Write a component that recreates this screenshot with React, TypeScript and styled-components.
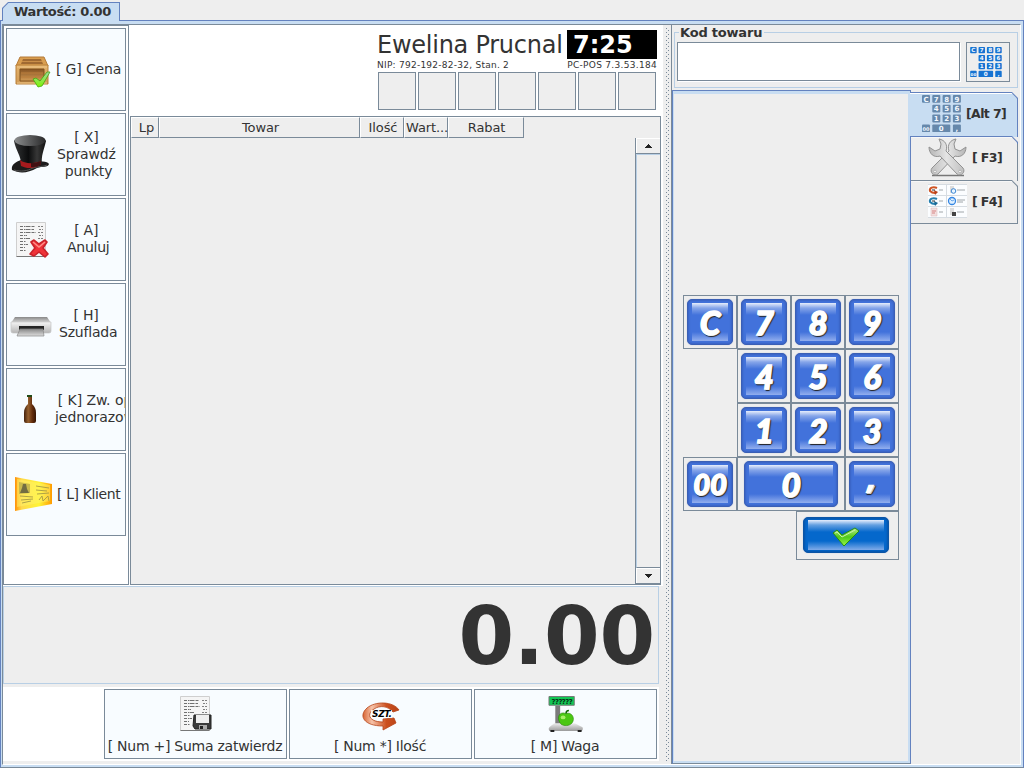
import React from 'react';
import styled, { createGlobalStyle } from 'styled-components';

const c = {
  bg: '#eeeeee',
  line: '#7a8a99',
  light: '#b8cfe5',
  tab: '#c8ddf2',
  blue: '#6382bf',
  text: '#333333',
  button: '#f8fcff',
};

const Global = createGlobalStyle`
  * { box-sizing: border-box; }
  body { margin: 0; background: ${c.bg}; overflow: hidden; }
  svg { display: block; flex: none; }
`;

const Page = styled.div`
  width: 1024px;
  height: 768px;
  display: flex;
  flex-direction: column;
  background: ${c.bg};
  color: ${c.text};
  font: 14px/17px 'DejaVu Sans', sans-serif;
  white-space: pre;
`;

const TabStrip = styled.div`
  height: 20px;
  padding: 2px 0 0 2px;
`;

const DocTab = styled.div`
  position: relative;
  width: 118px;
  height: 19px;
  padding: 1px 1px 0;
  background: ${c.blue};
  clip-path: polygon(6px 0, 100% 0, 100% 100%, 0 100%, 0 6px);
`;

const DocTabFace = styled.div`
  height: 18px;
  padding: 1px 0 0 11px;
  background: ${c.tab};
  clip-path: polygon(5.5px 0, 100% 0, 100% 100%, 0 100%, 0 5.5px);
  font-size: 13px;
  font-weight: bold;
  line-height: 16px;
  letter-spacing: -0.35px;
`;

const Frame = styled.div`
  height: 748px;
  border: 1px solid ${c.blue};
  border-bottom-color: ${c.line};
  padding: 3px 2px 2px 1px;
  background: ${c.tab};
`;

const Content = styled.div`
  height: 741px;
  display: flex;
  background: ${c.bg};
  border: 1px solid ${c.line};
  border-right-color: #fff;
  border-bottom-color: #fff;
`;

const SalePane = styled.div`
  width: 660px;
  display: flex;
  flex-direction: column;
`;

const SaleTop = styled.div`
  height: 561px;
  padding-bottom: 1px;
  display: flex;
  background: #fff;
`;

const Sidebar = styled.div`
  width: 126px;
  padding: 2px;
  display: flex;
  flex-direction: column;
  gap: 2px;
  border: 1px solid ${c.line};
  background: #fff;
`;

const SideButton = styled.div<{ $pad: number }>`
  height: 83px;
  flex: none;
  padding-left: ${p => p.$pad}px;
  display: flex;
  align-items: center;
  overflow: hidden;
  border: 1px solid ${c.line};
  background: ${c.button};
`;

const SideIcon = styled.div<{ $drop: number }>`
  padding-top: ${p => Math.max(0, p.$drop * 2)}px;
  padding-bottom: ${p => Math.max(0, p.$drop * -2)}px;
`;

const SideLabel = styled.div<{ $gap: number; $left?: boolean; $track?: number }>`
  margin-left: ${p => p.$gap}px;
  padding-bottom: 1px;
  text-align: ${p => (p.$left ? 'left' : 'center')};
  letter-spacing: ${p => p.$track ?? -0.15}px;
`;

const SaleMain = styled.div`
  width: 534px;
  padding: 0 2px 0 1px;
  display: flex;
  flex-direction: column;
`;

const Header = styled.div`
  height: 91px;
  display: flex;
  flex-direction: column;
  align-items: flex-end;
  padding: 5px 4px 0 0;
`;

const HeaderInfo = styled.div`
  width: 280px;
  display: flex;
  justify-content: space-between;
`;

const Operator = styled.div`
  width: 190px;
  font-size: 24px;
  line-height: 30px;
  height: 29px;
  letter-spacing: -0.25px;
`;

const Clock = styled.div`
  width: 90px;
  height: 29px;
  padding-left: 6px;
  background: #000;
  color: #fff;
  font-size: 24px;
  font-weight: bold;
  line-height: 30px;
`;

const Small = styled.div<{ $track: number }>`
  height: 12px;
  font-size: 9px;
  line-height: 12px;
  letter-spacing: ${p => p.$track}px;
`;

const Slots = styled.div`
  width: 280px;
  height: 40px;
  display: flex;
  gap: 2px;
  padding: 1px;
  background: ${c.bg};
`;

const Slot = styled.div`
  width: 38px;
  height: 38px;
  border: 1px solid ${c.line};
  box-shadow: 0 0 0 1px #fff;
  background: ${c.bg};
`;

const Table = styled.div`
  height: 469px;
  display: flex;
  flex-direction: column;
  border: 1px solid ${c.line};
  background: ${c.bg};
`;

const TableHead = styled.div`
  height: 21px;
  display: flex;
`;

const HeadCell = styled.div<{ $w: number; $shift: number }>`
  width: ${p => p.$w}px;
  padding-left: ${p => p.$shift}px;
  border: 1px solid ${c.line};
  border-top-color: #fff;
  border-left-color: #fff;
  text-align: center;
  font-size: 13px;
  line-height: 20px;
  letter-spacing: -0.1px;
`;

const TableBody = styled.div`
  flex: 1;
  display: flex;
  justify-content: flex-end;
`;

const ScrollBar = styled.div`
  width: 25px;
  display: flex;
  flex-direction: column;
  border-left: 1px solid ${c.line};
`;

const ScrollButton = styled.div`
  height: 16px;
  display: flex;
  align-items: center;
  justify-content: center;
  padding-right: 1px;
  border: 1px solid ${c.line};
  border-width: 0 0 1px 0;
  box-shadow: inset 1px 1px 0 #fff;
`;

const ScrollTrack = styled.div`
  flex: 1;
  border-left: 1px solid ${c.light};
  border-top: 1px solid ${c.light};
  border-bottom: 1px solid ${c.line};
`;

const Total = styled.div`
  width: 656px;
  height: 98px;
  padding-right: 3px;
  border: 1px solid ${c.light};
  text-align: right;
  font-size: 80px;
  font-weight: bold;
  line-height: 99px;
  letter-spacing: -0.2px;
`;

const ActionBar = styled.div`
  width: 656px;
  height: 74px;
  margin-top: 3px;
  padding: 2px;
  display: flex;
  justify-content: flex-end;
  gap: 2px;
  background: #fff;
`;

const ActionButton = styled.div`
  width: 183px;
  height: 70px;
  display: flex;
  flex-direction: column;
  align-items: center;
  padding-top: 6px;
  border: 1px solid ${c.line};
  background: ${c.button};
`;

const ActionLabel = styled.div`
  margin-top: 6px;
  padding-right: 1px;
  letter-spacing: -0.26px;
`;

const Divider = styled.div`
  width: 8px;
  padding: 3px 2px 2px 3px;
  display: flex;
`;

const Bumps = styled.div`
  flex: 1;
  background:
    radial-gradient(circle at 0.5px 0.5px, ${c.line} 0.6px, transparent 0.7px) 0 0 / 4px 4px,
    radial-gradient(circle at 0.5px 0.5px, ${c.line} 0.6px, transparent 0.7px) 2px 2px / 4px 4px;
`;

const InputPane = styled.div`
  width: 349px;
  border-left: 1px solid ${c.line};
`;

const CodeGroup = styled.fieldset`
  width: 344px;
  height: 63px;
  margin: 0 0 0 2px;
  padding: 2px 0 0 2px;
  min-width: 0;
  border: 1px solid ${c.light};
  display: flex;
`;

const CodeLegend = styled.legend`
  height: 15px;
  margin-left: 2px;
  padding: 0 2px 0 1px;
  font-size: 13px;
  font-weight: bold;
  line-height: 15px;
  letter-spacing: -0.2px;
`;

const CodeInput = styled.input`
  width: 283px;
  height: 39px;
  padding: 0 4px;
  border: 1px solid ${c.line};
  outline: 0;
  background: #fff;
  box-shadow: 1px 1px 0 #fff;
`;

const PadButton = styled.div`
  width: 44px;
  height: 40px;
  margin-left: 6px;
  padding: 4px 3px;
  border: 1px solid ${c.line};
`;

const PadPane = styled.div`
  height: 674px;
  margin-top: 2px;
  display: flex;
`;

const PadBody = styled.div`
  width: 239px;
  height: 674px;
  padding: 201px 0 0 8px;
  border: 1px solid ${c.blue};
  border-bottom-color: ${c.line};
  box-shadow: inset 0 3px 0 ${c.tab}, inset 1px 0 0 ${c.tab}, inset -2px -2px 0 ${c.tab};
`;

const Keys = styled.div`
  width: 218px;
  padding: 3px 0 0 2px;
  display: grid;
  grid-template-columns: repeat(4, 54px);
  grid-template-rows: repeat(4, 54px) 49px;
`;

const KeyCell = styled.div<{ $col: number; $row: number; $span?: number; $inset?: number; $enter?: boolean }>`
  grid-column: ${p => p.$col} / span ${p => p.$span || 1};
  grid-row: ${p => p.$row};
  margin-left: ${p => (p.$enter ? 5 : 0)}px;
  padding: ${p => (p.$enter ? '5px 9px 6px 6px' : `3px ${p.$inset || 3}px`)};
  display: flex;
  border: 1px solid ${c.line};
`;

const KeyFace = styled.div<{ $enter?: boolean }>`
  flex: 1;
  padding: ${p => (p.$enter ? 2 : 3)}px 4px;
  display: flex;
  border: 1px solid ${p => (p.$enter ? '#0b55a6' : '#3a5fb5')};
  border-radius: 5px;
  box-shadow: inset 0 0 2px 1px ${p => (p.$enter ? '#0755a8' : '#3a62c2')}, 0 0 1px #96a8cf;
  background: ${p => (p.$enter ? '#0568cc' : '#4272db')};
`;

const KeyGloss = styled.div<{ $small?: boolean; $comma?: boolean; $lift?: number }>`
  flex: 1;
  display: flex;
  align-items: center;
  justify-content: center;
  padding-bottom: ${p => Math.max(0, p.$lift || 0)}px;
  padding-top: ${p => Math.max(0, -(p.$lift || 0))}px;
  background:
    linear-gradient(#e6edfc, rgba(215, 227, 250, 0.45) 5px, transparent 12px),
    linear-gradient(to top, rgba(180, 200, 246, 0.7), transparent 9px);
  color: #fff;
  font-family: ${p => (p.$comma ? "'Open Sans'" : 'Lato')}, sans-serif;
  font-style: italic;
  font-weight: 900;
  font-size: ${p => (p.$small ? 29 : 33)}px;
  line-height: 34px;
  -webkit-text-stroke: ${p => (p.$comma ? 0 : 1.4)}px #fff;
  text-shadow: 1px 1px 0 #c8c8c8, 1px 2px 1px #222, 2px 1px 1px #333;
`;

const SideTabs = styled.div`
  width: 108px;
  margin: 2px 0 0 -1px;
  display: flex;
  flex-direction: column;
`;

const SideTab = styled.div<{ $kind: 'on' | 'next' | 'last' }>`
  height: ${p => (p.$kind === 'last' ? 44 : 45)}px;
  margin-bottom: -1px;
  padding: 1px 1px ${p => (p.$kind === 'last' ? 1 : 0)}px 0;
  background: ${p => (p.$kind === 'on' ? c.blue : p.$kind === 'next' ? `linear-gradient(${c.blue} 8px, ${c.line} 8px)` : c.line)};
  border-left: ${p => (p.$kind === 'on' ? 0 : 1)}px solid ${c.blue};
  clip-path: polygon(0 0, 102px 0, 100% 6px, 100% 100%, 0 100%);
`;

const SideTabFace = styled.div<{ $on?: boolean; $last?: boolean }>`
  height: 100%;
  padding-left: ${p => (p.$on ? 12 : 17)}px;
  padding-bottom: ${p => (p.$last ? 2 : 4)}px;
  display: flex;
  align-items: center;
  background: ${p => (p.$on ? c.tab : c.bg)};
  box-shadow: inset 0 1px 0 ${p => (p.$on ? '#fff' : '#f7f7f7')};
  clip-path: polygon(0 0, calc(100% - 5.5px) 0, 100% 5.5px, 100% 100%, 0 100%);
`;

const SideTabLabel = styled.div<{ $gap: number }>`
  margin-left: ${p => p.$gap}px;
  font-size: 12.5px;
  font-weight: bold;
  letter-spacing: -0.6px;
`;

const Arrow = ({ down }: { down?: boolean }) => (
  <svg width="8" height="4" viewBox="0 0 8 4">
    <path d={down ? 'M0 0h8L4 4z' : 'M0 4h8L4 0z'} fill="#222" shapeRendering="crispEdges" />
  </svg>
);

const Crate = () => (
  <svg width="36" height="33" viewBox="0 0 36 33">
    <defs>
      <linearGradient id="crate" x2="0" y2="1"><stop stopColor="#e3b36d" /><stop offset="1" stopColor="#d09a55" /></linearGradient>
      <linearGradient id="inside" x2="0" y2="1"><stop stopColor="#855222" /><stop offset="1" stopColor="#d39c56" /></linearGradient>
      <linearGradient id="tick" x2="0" y2="1"><stop stopColor="#9bd8a5" /><stop offset="1" stopColor="#7ff400" /></linearGradient>
    </defs>
    <path d="M5 1h24l4 9H1z" fill="#d99e50" stroke="#b57b38" />
    <path d="M8 3h18l2 5H6z" fill="#a06a32" />
    <path d="M7 5.500h20" stroke="#c98e48" />
    <path d="M1 9h32v19H1z" fill="url(#crate)" stroke="#b9803a" />
    <path d="M5 13h24v12H5z" fill="url(#inside)" stroke="#80521f" />
    <path d="M6 17h22M6 21h22" stroke="#bb7f3c" />
    <path d="M2 11h30M2 27h30" stroke="#edc487" />
    <path d="m18 23 3-1 4 3 7-9h3l-8 14-4 1z" fill="url(#tick)" stroke="#42a90c" strokeWidth=".8" />
  </svg>
);

const Hat = () => (
  <svg width="38" height="39" viewBox="0 0 38 39">
    <defs>
      <linearGradient id="hat"><stop stopColor="#323435" /><stop offset=".45" stopColor="#0b0c0d" /><stop offset=".72" stopColor="#373737" /><stop offset="1" stopColor="#0f0f0f" /></linearGradient>
      <linearGradient id="hatTop"><stop stopColor="#8b8d8e" /><stop offset="1" stopColor="#29292a" /></linearGradient>
    </defs>
    <path d="M1 36c-1-5 3-8 9-10l18 2c5-1 9 0 10 2-1 4-7 2-12 4-9 5-17 6-25 2z" fill="#1b1b1b" />
    <path d="M3 36c7 2 13 1 19-2 6-2 10-1 14-3" fill="none" stroke="#555" />
    <path d="M3 7c2-6 29-6 32 0-2 9-5 15-4 22-6 4-15 6-21 1C10 22 5 17 3 7z" fill="url(#hat)" />
    <path d="M9 26c5 4 14 4 21 1v3c-6 5-14 5-20 2z" fill="#a51a1d" />
    <path d="M20 29c4 0 7-1 10-2v3c-3 3-6 3-10 3z" fill="#411113" />
    <ellipse cx="19" cy="6.500" rx="15.500" ry="5.500" fill="url(#hatTop)" />
  </svg>
);

const Paper = () => (
  <g>
    <path d="M.5.500h29v34H.5z" fill="#f5f5f5" stroke="#cfcfcf" />
    <path d="M.5 34.500h29" stroke="#777" />
    <path d="M4 4.500h15M4 7.500h14M4 10.500h16M4 13.500h7M4 16.500h10M4 19.500h6M4 22.500h8M4 25.500h5M4 28.500h6" stroke="#707070" strokeDasharray="3 1 1 .5 5 1" />
    <path d="M22 4.500h5M23 7.500h4M22 10.500h5M23 13.500h4M22 16.500h5" stroke="#808080" strokeDasharray="2 1" />
  </g>
);

const CancelBill = () => (
  <svg width="33" height="36" viewBox="0 0 33 36">
    <Paper />
    <path d="m15 20 3-2 5 4 6-4 2 2-4 6 5 6-3 3-6-5-5 4-4-2 5-6z" fill="#ef3339" stroke="#c9232a" strokeWidth="1.600" strokeLinejoin="round" />
    <path d="m17 20 6 5 6-5" fill="none" stroke="#ff8d86" strokeWidth="1.500" />
  </svg>
);

const SaveBill = () => (
  <svg width="32" height="36" viewBox="0 0 32 36">
    <Paper />
    <path d="M14 19h17v14H15l-2-3z" fill="#3a3a3a" stroke="#222" />
    <path d="M16 19h13v8H16z" fill="#eeeeee" />
    <path d="M19 29h8v4h-8z" fill="#aaa" /><path d="M20 30h3v3h-3z" fill="#222" />
  </svg>
);

const Drawer = () => (
  <svg width="42" height="22" viewBox="0 0 42 22">
    <defs>
      <linearGradient id="lid" x2="0" y2="1"><stop stopColor="#888" /><stop offset="1" stopColor="#dedede" /></linearGradient>
      <linearGradient id="box" x2="0" y2="1"><stop stopColor="#f5f5f5" /><stop offset="1" stopColor="#b4b4b4" /></linearGradient>
    </defs>
    <path d="M5 1h32l4 6H1z" fill="url(#lid)" />
    <path d="M1 6h40v9q0 2-2 2H3q-2 0-2-2z" fill="url(#box)" stroke="#c4c4c4" strokeWidth=".7" />
    <path d="M9 10h25v4H9z" fill="#252525" />
    <path d="M10 13h23l1 7H7z" fill="url(#lid)" stroke="#888" strokeWidth=".7" />
  </svg>
);

const Bottle = () => (
  <svg width="13" height="30" viewBox="0 0 13 30">
    <defs><linearGradient id="bottle"><stop stopColor="#42200c" /><stop offset=".35" stopColor="#96602f" /><stop offset=".7" stopColor="#622c0c" /><stop offset="1" stopColor="#351403" /></linearGradient></defs>
    <path d="M4 2h4v8c3 3 4 5 4 9v8q0 2-2 2H2q-2 0-2-2v-8c0-4 1-6 4-9z" fill="url(#bottle)" />
    <path d="M3 1h5v2H3z" fill="#234c18" />
  </svg>
);

const ClientCard = () => (
  <svg width="38" height="36" viewBox="0 0 38 36">
    <defs><linearGradient id="card"><stop stopColor="#ff9208" /><stop offset=".18" stopColor="#ffd94c" /><stop offset=".65" stopColor="#fff536" /><stop offset="1" stopColor="#ff9b00" /></linearGradient></defs>
    <path d="m0 1 37 7v20L0 35z" fill="url(#card)" />
    <path d="m2 3 33 6v16L2 31z" fill="#fff46a" opacity=".5" />
    <path d="m4 6 11 2v9L4 18z" fill="#c9b94c" /><path d="m5 17 2-5 1-4h3l1 5 2 4z" fill="#736d42" />
    <path d="m21 10 13 2m-13 2 11 1m-10 3 12-1M5 20l13 1M6 24l12-1M7 27l9-2M24 24l3-4 1 5 5-5 1 5" fill="none" stroke="#a59a45" strokeWidth=".9" />
  </svg>
);

const Quantity = () => (
  <svg width="38" height="36" viewBox="0 0 38 36">
    <defs><linearGradient id="swirl"><stop stopColor="#d76635" /><stop offset=".25" stopColor="#f7c3a9" /><stop offset=".65" stopColor="#cc501f" /><stop offset="1" stopColor="#b84317" /></linearGradient></defs>
    <path d="M37 14C31 5 13 5 5 12c-9 8-3 18 16 18v4l13-7-2-5-11 1v3C7 26 4 18 12 13c6-4 14-3 19 3z" fill="url(#swirl)" stroke="#b54316" strokeWidth=".8" />
    <path d="M9 14h21v8H9z" fill="#fff" opacity=".8" />
    <text x="10" y="21" fontFamily="DejaVu Sans, sans-serif" fontSize="9" fontWeight="bold" fontStyle="italic" fill="#000" textLength="20">SZT.</text>
  </svg>
);

const Scale = () => (
  <svg width="36" height="36" viewBox="0 0 36 37">
    <defs><linearGradient id="base" x2="0" y2="1"><stop stopColor="#ededed" /><stop offset="1" stopColor="#999" /></linearGradient></defs>
    <path d="M7 10h5v20H7z" fill="#7b7b7b" />
    <path d="M6 28h21l8 4q1 3-1 4H1q-2-3 1-5z" fill="url(#base)" />
    <path d="M2 36h4m24 0h4" stroke="#222" strokeWidth="2" />
    <path d="M.5.500h26v9H.5z" fill="#11c653" stroke="#777" />
    <text x="3" y="8" fontFamily="DejaVu Sans, sans-serif" fontSize="7" fontWeight="bold" fill="#072c13" textLength="22">??????</text>
    <path d="M18 18c-8-3-10 6-5 11 3 2 8 2 11-1 4-5 0-12-6-10z" fill="#4bc713" stroke="#248305" strokeWidth=".6" />
    <path d="M18 18c0-2 1-3 3-3" fill="none" stroke="#136500" strokeWidth="1.500" />
    <ellipse cx="15" cy="22" rx="2.500" ry="2" fill="#a9ef67" />
  </svg>
);

const padKeys: [string, number, number, number][] = [
  ['C', 0, 0, 1], ['7', 1, 0, 1], ['8', 2, 0, 1], ['9', 3, 0, 1],
  ['4', 1, 1, 1], ['5', 2, 1, 1], ['6', 3, 1, 1],
  ['1', 1, 2, 1], ['2', 2, 2, 1], ['3', 3, 2, 1],
  ['00', 0, 3, 1], ['0', 1, 3, 2], [',', 3, 3, 1],
];

const MiniPad = ({ w, h, color }: { w: number; h: number; color: string }) => (
  <svg width={w} height={h} viewBox="0 0 39 37">
    {padKeys.map(([t, x, y, s]) => (
      <g key={t}>
        <rect x={x * 10.3} y={y * 9.8} width={s === 2 ? 18 : 8} height="7.800" rx="1" fill={color} />
        <text x={x * 10.3 + (s === 2 ? 9 : 4)} y={y * 9.8 + 6.5} textAnchor="middle" fontFamily="DejaVu Sans, sans-serif" fontWeight="bold" fontSize={t === '00' ? 5 : 7} fill="#f4f8ff">{t}</text>
      </g>
    ))}
  </svg>
);

const wrench = 'M11 1c6 1 9 6 7 12l17 17c3 4-2 9-6 6L12 18C6 20 1 16 1 9l6 4 5-2 1-5z';
const Tools = () => (
  <svg width="39" height="39" viewBox="0 0 39 39">
    <defs><linearGradient id="steel"><stop stopColor="#b5b5b5" /><stop offset=".5" stopColor="#e4e4e4" /><stop offset="1" stopColor="#c0c0c0" /></linearGradient></defs>
    <path d="M4 37.500h32" stroke="#777" strokeWidth="1.500" />
    <path d={wrench} transform="translate(39 0) scale(-1 1)" fill="url(#steel)" stroke="#929292" />
    <path d={wrench} fill="url(#steel)" stroke="#929292" />
    <circle cx="32" cy="33.500" r="1.300" fill="#f8f8f8" stroke="#999" strokeWidth=".6" />
    <circle cx="7" cy="33.500" r="1.300" fill="#f8f8f8" stroke="#999" strokeWidth=".6" />
  </svg>
);

const Functions = () => (
  <svg width="39" height="34" viewBox="0 0 39 34">
    <path d="M0 0h39v34H0z" fill="#d6dce2" />
    <path d="M0 1h18v10H0zm19 0h20v10H19zM0 12h18v10H0zm19 0h20v10H19zM0 23h18v10H0zm19 0h20v10H19z" fill="#fbfdff" />
    <path d="M9 4C5 2 1 4 2 7q2 2 5 2" fill="none" stroke="#cf5525" strokeWidth="2" /><path d="m6 6 4 2-3 3z" fill="#b9411a" /><path d="M4 6h3" stroke="#333" />
    <path d="M9 15c-4-2-8 0-7 3q2 2 5 2" fill="none" stroke="#267fae" strokeWidth="2" /><path d="m6 17 4 2-3 3z" fill="#1b6894" /><path d="M4 17h3" stroke="#333" />
    <path d="M3 24h6v8H3z" fill="#f2dfdf" stroke="#ddb6b6" strokeWidth=".5" /><path d="M4 27h4m-4 2h3" stroke="#d78383" />
    <path d="M22 2h4v7h-4z" fill="#ddd" /><circle cx="25.500" cy="7" r="2.300" fill="#e9f5ff" stroke="#3b86d3" />
    <circle cx="24" cy="17" r="3.500" fill="#dff0ff" stroke="#3486e3" strokeWidth="1.300" /><path d="m22 15 2 2 2-1" fill="none" stroke="#3486e3" strokeWidth=".7" />
    <path d="M22 24h4v7h-4z" fill="#ddd" /><path d="M24 28h4v4h-4z" fill="#444" />
    <path d="M11 6h4m14 0h8M11 17h4m14-1h8m-8 2h6M11 28h4m14 0h7" stroke="#8c9096" strokeWidth=".8" />
  </svg>
);

const Check = () => (
  <svg width="28" height="20" viewBox="0 0 28 20">
    <defs><linearGradient id="check" x2="0" y2="1"><stop stopColor="#b9ec8a" /><stop offset=".5" stopColor="#4fc91c" /><stop offset="1" stopColor="#9af94a" /></linearGradient></defs>
    <path d="m1 6 4-3 5 5L23 1l4 3-15 15z" fill="url(#check)" stroke="#268d12" />
    <path d="m3 6 2-1 5 5L23 3" fill="none" stroke="#c8f2a9" />
  </svg>
);

const sideItems = [
  { icon: <Crate />, drop: 3, pad: 8, gap: 5, track: -0.15, text: '[ G] Cena' },
  { icon: <Hat />, drop: -1, pad: 4, gap: 8, track: -0.15, text: ' [ X] \nSprawdź\n punkty' },
  { icon: <CancelBill />, drop: 0, pad: 9, gap: 18, track: -0.25, text: '[ A] \nAnuluj' },
  { icon: <Drawer />, drop: 2, pad: 3, gap: 7, track: -0.2, text: '[ H] \nSzuflada' },
  { icon: <Bottle />, drop: -1, pad: 17, gap: 18, track: -0.05, left: true, text: '\u200a\u200a[ K] Zw. opak.\njednorazowe' },
  { icon: <ClientCard />, drop: -1, pad: 8, gap: 4, track: -0.38, text: '[ L] Klient' },
];

const columns: [string, number, number][] = [
  ['Lp', 28, 3], ['Towar', 201, 2], ['Ilość', 44, 2], ['Wart...', 44, 1], ['Rabat', 76, 1],
];

export default function App() {
  return (
    <Page>
      <Global />
      <TabStrip>
        <DocTab><DocTabFace>Wartość: 0.00</DocTabFace></DocTab>
      </TabStrip>
      <Frame>
        <Content>
          <SalePane>
            <SaleTop>
              <Sidebar>
                {sideItems.map(item => (
                  <SideButton key={item.text} $pad={item.pad}>
                    <SideIcon $drop={item.drop}>{item.icon}</SideIcon>
                    <SideLabel $gap={item.gap} $left={item.left} $track={item.track}>{item.text}</SideLabel>
                  </SideButton>
                ))}
              </Sidebar>
              <SaleMain>
                <Header>
                  <HeaderInfo>
                    <Operator>Ewelina Prucnal</Operator>
                    <Clock>7:25</Clock>
                  </HeaderInfo>
                  <HeaderInfo>
                    <Small $track={0.25}>NIP: 792-192-82-32, Stan. 2</Small>
                    <Small $track={0.3}>PC-POS 7.3.53.184</Small>
                  </HeaderInfo>
                  <Slots>
                    {[0, 1, 2, 3, 4, 5, 6].map(n => <Slot key={n} />)}
                  </Slots>
                </Header>
                <Table>
                  <TableHead>
                    {columns.map(([name, w, shift]) => <HeadCell key={name} $w={w} $shift={shift}>{name}</HeadCell>)}
                  </TableHead>
                  <TableBody>
                    <ScrollBar>
                      <ScrollButton><Arrow /></ScrollButton>
                      <ScrollTrack />
                      <ScrollButton><Arrow down /></ScrollButton>
                    </ScrollBar>
                  </TableBody>
                </Table>
              </SaleMain>
            </SaleTop>
            <Total>0.00</Total>
            <ActionBar>
              <ActionButton><SaveBill /><ActionLabel>[ Num +] Suma zatwierdz</ActionLabel></ActionButton>
              <ActionButton><Quantity /><ActionLabel>[ Num *] Ilość</ActionLabel></ActionButton>
              <ActionButton><Scale /><ActionLabel>[ M] Waga</ActionLabel></ActionButton>
            </ActionBar>
          </SalePane>
          <Divider><Bumps /></Divider>
          <InputPane>
            <CodeGroup>
              <CodeLegend>Kod towaru</CodeLegend>
              <CodeInput />
              <PadButton><MiniPad w={32} h={30} color="#1673d2" /></PadButton>
            </CodeGroup>
            <PadPane>
              <PadBody>
                <Keys>
                  {padKeys.map(([t, x, y, s]) => (
                    <KeyCell key={t} $col={x + 1} $row={y + 1} $span={s} $inset={s === 2 ? 6 : 3}>
                      <KeyFace><KeyGloss $small={t === '00'} $comma={t === ','} $lift={t === ',' ? 14 : 0}>{t}</KeyGloss></KeyFace>
                    </KeyCell>
                  ))}
                  <KeyCell $col={3} $row={5} $span={2} $enter>
                    <KeyFace $enter><KeyGloss $lift={-3}><Check /></KeyGloss></KeyFace>
                  </KeyCell>
                </Keys>
              </PadBody>
              <SideTabs>
                <SideTab $kind="on">
                  <SideTabFace $on><MiniPad w={39} h={37} color="#6688ab" /><SideTabLabel $gap={5}>[Alt 7]</SideTabLabel></SideTabFace>
                </SideTab>
                <SideTab $kind="next">
                  <SideTabFace><Tools /><SideTabLabel $gap={5}>[ F3]</SideTabLabel></SideTabFace>
                </SideTab>
                <SideTab $kind="last">
                  <SideTabFace $last><Functions /><SideTabLabel $gap={5}>[ F4]</SideTabLabel></SideTabFace>
                </SideTab>
              </SideTabs>
            </PadPane>
          </InputPane>
        </Content>
      </Frame>
    </Page>
  );
}
